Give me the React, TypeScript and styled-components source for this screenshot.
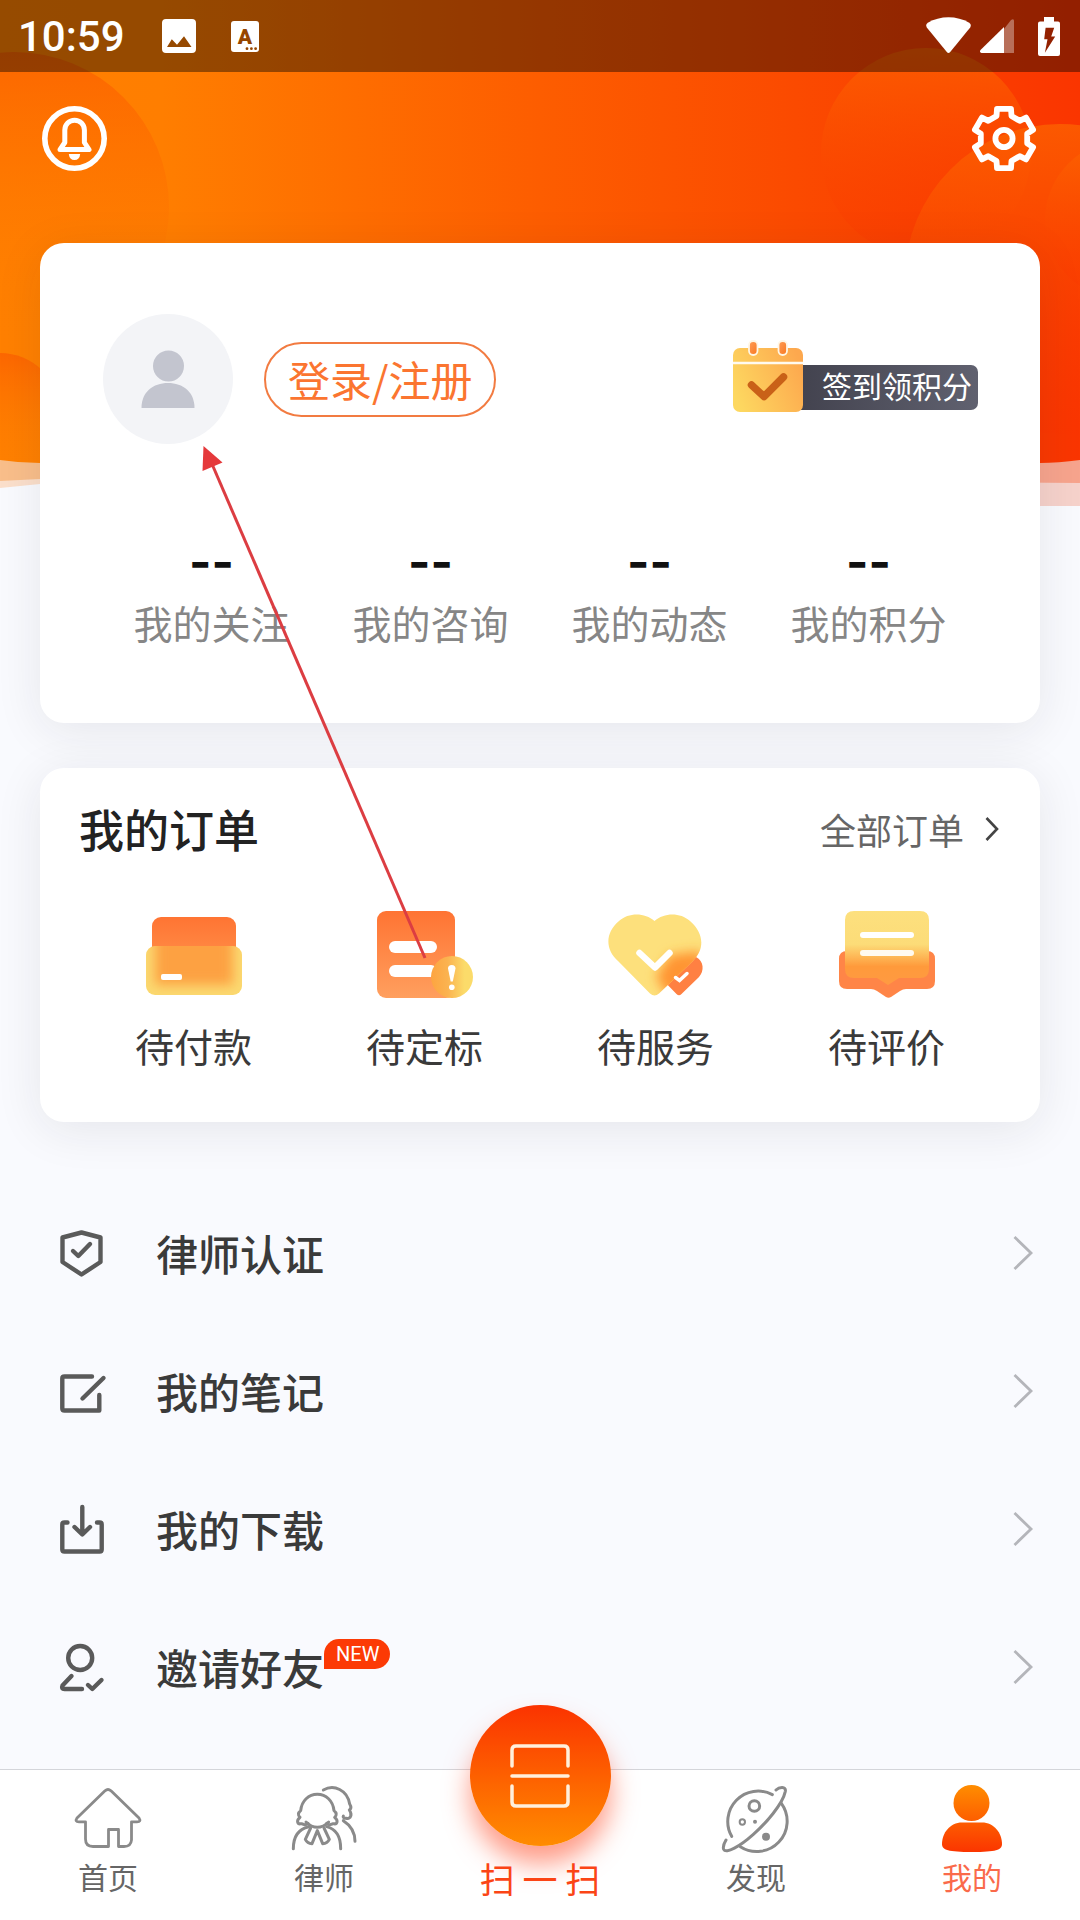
import React from "react";
import styled, { createGlobalStyle } from "styled-components";

const GlobalStyle = createGlobalStyle`
  *, *::before, *::after { box-sizing: border-box; }
  body {
    margin: 0;
    background: #f9fafe;
    font-family: "Noto Sans CJK SC", "Noto Sans", sans-serif;
    color: #3a3a3a;
  }
  button { font: inherit; color: inherit; border: 0; padding: 0; background: none; cursor: pointer; }
  a { color: inherit; text-decoration: none; }
  svg { display: block; flex: none; overflow: visible; }
  h2, ul, dl, dd, dt { margin: 0; padding: 0; }
  ul { list-style: none; }
`;

const Page = styled.div`
  position: relative;
  display: flex;
  flex-direction: column;
  min-height: 100vh;
  overflow: hidden;
`;

const Backdrop = styled.svg`
  position: absolute;
  inset: 0 0 auto 0;
  width: 100%;
  height: 510px;
`;

const StatusBar = styled.header`
  position: relative;
  display: flex;
  align-items: center;
  justify-content: space-between;
  height: 72px;
  padding: 0 20px 0 18px;
  background: rgba(0, 0, 0, 0.41);
  color: #fff;
`;

const StatusGroup = styled.div<{ $gap: number }>`
  display: flex;
  align-items: center;
  gap: ${(p) => p.$gap}px;
`;

const Clock = styled.time`
  padding-top: 2px;
  margin-right: 2px;
  font: 500 42px/48px Roboto, sans-serif;
`;

const TopBar = styled.div`
  position: relative;
  display: flex;
  justify-content: space-between;
  padding: 34px 44px 72px 42px;
`;

const Main = styled.main`
  position: relative;
  flex: 1;
  display: flex;
  flex-direction: column;
  gap: 45px;
`;

const Card = styled.section`
  margin: 0 40px;
  border-radius: 24px;
  background: #fff;
  box-shadow: 0 8px 48px rgba(30, 32, 45, 0.09);
`;

const Profile = styled.div`
  display: flex;
  align-items: center;
  padding: 71px 62px 0 63px;
`;

const Avatar = styled.div`
  width: 130px;
  height: 130px;
  border-radius: 50%;
  background: #f3f4f7;
`;

const LoginButton = styled.button`
  height: 75px;
  margin-left: 31px;
  padding: 0 22px;
  border: 2px solid #f27b41;
  border-radius: 38px;
  color: #fb7530;
  font-size: 42px;
  line-height: 64px;
`;

const CheckInButton = styled.button`
  display: flex;
  align-items: flex-start;
  height: 76px;
  margin-left: auto;
`;

const CheckInLabel = styled.span`
  order: 1;
  height: 45px;
  margin: 24px 0 0 -9px;
  padding: 0 6px 0 27px;
  border-radius: 0 7px 7px 0;
  background: linear-gradient(90deg, #42424e, #60616f);
  color: #fff;
  font-size: 30px;
  line-height: 41px;
`;

const Calendar = styled.svg`
  position: relative;
  z-index: 1;
`;

const Stats = styled.dl`
  display: grid;
  grid-template-columns: repeat(4, 1fr);
  padding: 94px 62px 77px;
`;

const Stat = styled.div`
  display: flex;
  flex-direction: column-reverse;
  gap: 12px;
  text-align: center;
`;

const StatLabel = styled.dt`
  color: #868686;
  font-size: 39px;
  line-height: 48px;
`;

const StatValue = styled.dd`
  color: #111;
  font: 700 48px/48px Inter, sans-serif;
`;

const CardHead = styled.div`
  display: flex;
  align-items: center;
  justify-content: space-between;
  padding: 29px 41px 0 39px;
`;

const CardTitle = styled.h2`
  color: #222;
  font-size: 45px;
  font-weight: 500;
  line-height: 64px;
`;

const AllOrders = styled.a`
  display: flex;
  align-items: center;
  gap: 21px;
  color: #666;
  font-size: 36px;
  line-height: 64px;
`;

const OrderGrid = styled.ul`
  display: grid;
  grid-template-columns: repeat(4, 1fr);
  padding: 50px 38px 53px;
`;

const OrderLink = styled.a`
  display: flex;
  flex-direction: column;
  align-items: center;
  gap: 22px;
  font-size: 39px;
  line-height: 48px;
`;

const Menu = styled.ul`
  margin-top: 17px;
  padding: 0 47px 32px 58px;
`;

const MenuLink = styled.a`
  display: flex;
  align-items: center;
  justify-content: space-between;
  height: 138px;
  font-size: 42px;
  font-weight: 500;
  line-height: 60px;
`;

const MenuName = styled.span`
  display: flex;
  align-items: center;
  gap: 50px;
`;

const MenuText = styled.span`
  position: relative;
`;

const NewBadge = styled.small`
  position: absolute;
  left: 100%;
  top: 2px;
  padding: 0 11px 0 12px;
  border-radius: 15px 15px 15px 0;
  background: #fc3a05;
  color: #fff;
  font: 400 20px/30px Roboto, sans-serif;
`;

const TabBar = styled.nav`
  position: relative;
  display: grid;
  grid-template-columns: repeat(5, 1fr);
  height: 151px;
  border-top: 1px solid #d4d5da;
  background: #fff;
`;

const Tab = styled.a<{ $tone?: "active" | "scan" }>`
  position: relative;
  display: flex;
  flex-direction: column;
  align-items: center;
  gap: 4px;
  padding-top: 16px;
  color: ${(p) => (p.$tone === "active" ? "#fa6a4a" : p.$tone === "scan" ? "#fb4516" : "#666")};
  font-size: ${(p) => (p.$tone === "scan" ? 35 : 30)}px;
  line-height: 36px;
`;

const ScanSpace = styled.span`
  height: 70px;
`;

const ScanDisc = styled.span`
  position: absolute;
  top: -65px;
  display: grid;
  place-items: center;
  width: 141px;
  height: 141px;
  border-radius: 50%;
  background: linear-gradient(#fb3300, #ff8c00);
  box-shadow: 0 18px 26px rgba(255, 60, 20, 0.5);
`;

const Annotation = styled.svg`
  position: absolute;
  left: 200px;
  top: 444px;
  pointer-events: none;
`;

const HeroArt = () => (
  <Backdrop viewBox="0 0 1080 510" preserveAspectRatio="none" aria-hidden="true">
    <defs>
      <linearGradient id="hero" x1="0" x2="1" y1="0" y2="0">
        <stop offset="0" stopColor="#ff8000" />
        <stop offset="0.15" stopColor="#ff7e00" />
        <stop offset="0.5" stopColor="#fd5d00" />
        <stop offset="0.85" stopColor="#fa4100" />
        <stop offset="1" stopColor="#fa3500" />
      </linearGradient>
      <linearGradient id="bubbleLeft" x1="0" x2="0" y1="0" y2="1">
        <stop offset="0" stopColor="#fb5600" stopOpacity="0.6" />
        <stop offset="0.95" stopColor="#ff8000" stopOpacity="0" />
      </linearGradient>
      <linearGradient id="bubbleRight" x1="0" x2="0" y1="0" y2="1">
        <stop offset="0" stopColor="#fc6400" stopOpacity="0.75" />
        <stop offset="1" stopColor="#fa3400" stopOpacity="0.25" />
      </linearGradient>
      <clipPath id="heroClip">
        <path d="M0 0H1080V460Q1058 463 1040 463H40Q20 463 0 460Z" />
      </clipPath>
    </defs>
    <path d="M0 0H600V484H40L0 488Z" fill="#fbdfcb" />
    <path d="M600 300H1080V506H600Z" fill="#f6d2cb" />
    <path d="M0 300H600V479H40L0 481Z" fill="#f9be8a" />
    <path d="M600 300H1080V483L600 479Z" fill="#f7a48d" />
    <g clipPath="url(#heroClip)">
      <rect width="1080" height="480" fill="url(#hero)" />
      <circle cx="14" cy="207" r="155" fill="url(#bubbleLeft)" />
      <circle cx="0" cy="413" r="60" fill="url(#bubbleLeft)" />
      <circle cx="926" cy="153" r="105" fill="url(#bubbleRight)" />
      <circle cx="1060" cy="279" r="155" fill="url(#bubbleRight)" />
      <circle cx="1125" cy="220" r="80" fill="url(#bubbleRight)" />
    </g>
  </Backdrop>
);

const PictureIcon = () => (
  <svg width="34" height="34" viewBox="0 0 34 34" fill="#fff" fillRule="evenodd" aria-hidden="true">
    <path d="M4 0H30Q34 0 34 4V30Q34 34 30 34H4Q0 34 0 30V4Q0 0 4 0ZM5 28H29.5L22 17.3L15 25.7L9.8 20.3Z" />
  </svg>
);

const LanguageIcon = () => (
  <svg width="28" height="31" viewBox="0 0 28 31" aria-hidden="true">
    <rect width="28" height="31" rx="3" fill="#fff" />
    <text x="14" y="22.5" textAnchor="middle" fontFamily="Roboto, sans-serif" fontWeight="900" fontSize="21" fill="#964500">A</text>
    <g fill="#964500">
      <circle cx="16" cy="27.7" r="1.4" />
      <circle cx="20.4" cy="27.7" r="1.4" />
      <circle cx="24.6" cy="27.7" r="1.4" />
    </g>
  </svg>
);

const WifiIcon = () => (
  <svg width="45" height="38" viewBox="0 0 45 38" fill="#fff" aria-hidden="true">
    <path d="M20.8 35L0.8 10.5C-0.4 8.6 0.2 6.8 1.8 5.8C14-1.6 31-1.6 43.2 5.8C44.8 6.8 45.4 8.6 44.2 10.5L24.2 35Q22.5 37 20.8 35Z" />
  </svg>
);

const SignalIcon = () => (
  <svg width="34" height="34" viewBox="0 0 34 34" fill="#fff" aria-hidden="true">
    <path d="M24 10L31 1Q34-1 34 2V34H24Z" opacity="0.35" />
    <path d="M24 8V34H1.5Q-1 33 0.5 31Z" />
  </svg>
);

const BatteryIcon = () => (
  <svg width="22" height="39" viewBox="0 0 22 39" fill="#fff" fillRule="evenodd" aria-hidden="true">
    <path d="M6 0H16V4.5H20Q22 4.5 22 6.5V37Q22 39 20 39H2Q0 39 0 37V6.5Q0 4.5 2 4.5H6ZM7.6 10.7L6.2 22.3H9.5L6.9 35.7L17.2 19.6H13.2L16.2 10.7Z" />
  </svg>
);

const BellIcon = () => (
  <svg width="65" height="65" viewBox="0 0 65 65" fill="none" stroke="#fff" aria-hidden="true">
    <circle cx="32.5" cy="32.5" r="29.7" strokeWidth="5.6" />
    <path d="M22.8 24a9.8 9.8 0 0 1 19.6 0V36.5L47 43.6H18L22.8 36.5Z" strokeWidth="5" strokeLinejoin="round" />
    <path d="M26.8 48H38.2Q37.5 54 32.5 54Q27.5 54 26.8 48Z" fill="#fff" stroke="none" />
  </svg>
);

const gearPoints = [0, 60, 120, 180, 240, 300]
  .flatMap((deg) => {
    const a = (deg * Math.PI) / 180;
    return [[-7.5, -22.5], [-7, -29.6], [7, -29.6], [7.5, -22.5]].map(([x, y]) =>
      `${(x * Math.cos(a) - y * Math.sin(a)).toFixed(1)},${(x * Math.sin(a) + y * Math.cos(a)).toFixed(1)}`
    );
  })
  .join(" ");

const GearIcon = () => (
  <svg width="64" height="65" viewBox="-32 -32.5 64 65" fill="none" stroke="#fff" strokeWidth="5.8" strokeLinejoin="round" aria-hidden="true">
    <polygon points={gearPoints} />
    <circle r="8.6" />
  </svg>
);

const AvatarArt = () => (
  <svg width="130" height="130" viewBox="0 0 130 130" fill="#c3c5cf" aria-hidden="true">
    <circle cx="65.5" cy="52" r="15.5" />
    <path d="M38.5 94C38.5 78 50 69 65 69C80 69 91.5 78 91.5 94Z" />
  </svg>
);

const CalendarArt = () => (
  <Calendar width="72" height="76" viewBox="0 0 72 76" aria-hidden="true">
    <defs>
      <linearGradient id="cal" x1="0" x2="1" y1="0.7" y2="0.3">
        <stop offset="0" stopColor="#fdd860" />
        <stop offset="1" stopColor="#fda84e" />
      </linearGradient>
      <linearGradient id="ring" x1="0" x2="1" y1="0" y2="1">
        <stop offset="0" stopColor="#ff9d57" />
        <stop offset="1" stopColor="#f9781f" />
      </linearGradient>
    </defs>
    <rect x="1" y="7" width="70" height="64" rx="7" fill="url(#cal)" />
    <path d="M1 22H71" stroke="#fffaf0" strokeWidth="2.4" />
    <rect x="17" y="0" width="8.5" height="14" rx="4.2" fill="url(#ring)" stroke="#fff6e4" strokeWidth="1.8" />
    <rect x="46.5" y="0" width="8.5" height="14" rx="4.2" fill="url(#ring)" stroke="#fff6e4" strokeWidth="1.8" />
    <path d="M19.5 44L32 55.5L51.5 36" fill="none" stroke="#c96118" strokeWidth="7.5" strokeLinecap="round" strokeLinejoin="round" />
  </Calendar>
);

const WalletArt = () => (
  <svg width="96" height="88" viewBox="0 0 96 88" aria-hidden="true">
    <defs>
      <linearGradient id="walletBack" x1="0" x2="0" y1="0" y2="1">
        <stop offset="0" stopColor="#ff7433" />
        <stop offset="1" stopColor="#ff914a" />
      </linearGradient>
      <filter id="walletSoft" x="-20%" y="-30%" width="140%" height="160%">
        <feGaussianBlur stdDeviation="6" />
      </filter>
      <clipPath id="walletFront">
        <rect x="0" y="35" width="96" height="49" rx="9" />
      </clipPath>
    </defs>
    <rect x="6" y="6" width="84" height="50" rx="9" fill="url(#walletBack)" />
    <g clipPath="url(#walletFront)">
      <rect y="35" width="96" height="49" fill="#fbd970" />
      <rect x="9" y="20" width="78" height="54" fill="#fda143" filter="url(#walletSoft)" />
    </g>
    <rect x="15" y="63" width="21" height="6" rx="2" fill="#fff" />
  </svg>
);

const BidArt = () => (
  <svg width="96" height="88" viewBox="0 0 96 88" aria-hidden="true">
    <defs>
      <linearGradient id="bidSheet" x1="0" x2="0" y1="0" y2="1">
        <stop offset="0" stopColor="#ff7433" />
        <stop offset="1" stopColor="#ff9f5e" />
      </linearGradient>
      <linearGradient id="bidAlert" x1="0" x2="1" y1="0" y2="0">
        <stop offset="0" stopColor="#fda440" />
        <stop offset="0.4" stopColor="#fbb350" />
        <stop offset="0.8" stopColor="#fbdb6a" />
      </linearGradient>
    </defs>
    <rect width="78" height="87" rx="9" fill="url(#bidSheet)" />
    <rect x="12" y="30" width="48" height="12" rx="6" fill="#fff" />
    <rect x="12" y="54" width="48" height="12" rx="6" fill="#fff" />
    <circle cx="75" cy="66" r="21" fill="url(#bidAlert)" />
    <path d="M71 57.5Q71 54 74.8 54Q78.5 54 78.5 57.5L75.8 70.5H73.7Z" fill="#fff" />
    <circle cx="74.8" cy="76.2" r="2.8" fill="#fff" />
  </svg>
);

const HeartArt = () => (
  <svg width="96" height="88" viewBox="0 0 96 88" aria-hidden="true">
    <defs>
      <filter id="heartSoft" x="-40%" y="-40%" width="180%" height="180%">
        <feGaussianBlur stdDeviation="6" />
      </filter>
      <clipPath id="heartShape">
        <path d="M46.5 10C56 1.5 72 1 82 10C96 22 97 38 85 50L51 82.5Q46.5 86.5 42 82.5L10 50C-3 38-3 22 11 10C21 1 37 1.5 46.5 10Z" />
      </clipPath>
    </defs>
    <path d="M88 46C96 50 96.5 60 91 66L73.5 83Q71 85.5 68.5 83L50 64L70 46Z" fill="#ff8042" />
    <g clipPath="url(#heartShape)">
      <rect width="96" height="88" fill="#fde07c" />
      <path d="M62 44L92 40L96 52L62 88L48 66Z" fill="#ff9433" filter="url(#heartSoft)" />
    </g>
    <path d="M31.5 42L47 56.5L61.5 42" fill="none" stroke="#fff" strokeWidth="6.5" strokeLinecap="round" strokeLinejoin="round" />
    <path d="M67.5 66.5L71.5 69.5L79 62.5" fill="none" stroke="#fff" strokeWidth="3.5" strokeLinecap="round" />
  </svg>
);

const ReviewArt = () => (
  <svg width="96" height="88" viewBox="0 0 96 88" aria-hidden="true">
    <defs>
      <linearGradient id="reviewCard" x1="0" x2="0" y1="0" y2="1">
        <stop offset="0" stopColor="#fde07e" />
        <stop offset="0.45" stopColor="#fcdc78" />
        <stop offset="0.75" stopColor="#ff9a3b" />
        <stop offset="1" stopColor="#ff9a42" />
      </linearGradient>
    </defs>
    <path d="M8 40H88Q96 40 96 48V70Q96 78 88 78H67Q64 78 61 80L52 86Q49.5 87.5 47 86L38 80Q35 78 32 78H8Q0 78 0 70V48Q0 40 8 40Z" fill="#ff8547" />
    <path d="M15 0H81Q90 0 90 9V58Q90 67 81 67H60L49 74L38 67H15Q6 67 6 58V9Q6 0 15 0Z" fill="url(#reviewCard)" />
    <rect x="21" y="21" width="54" height="6" rx="3" fill="#fff" />
    <rect x="21" y="39" width="54" height="6" rx="3" fill="#fffaf0" />
  </svg>
);

const LineIcon = styled.svg.attrs({
  width: 48,
  height: 48,
  viewBox: "0 0 48 48",
  "aria-hidden": true,
})`
  fill: none;
  stroke: #5a5a5a;
  stroke-width: 4.4px;
  stroke-linecap: round;
  stroke-linejoin: round;
`;

const menu = [
  {
    name: "律师认证",
    icon: <LineIcon><path d="M23.5 3.5L42.5 8.5V33L23.5 45.5L4.5 33V8.5Z" /><path d="M15 22L20.3 27L32 15" /></LineIcon>,
  },
  {
    name: "我的笔记",
    icon: <LineIcon><path d="M34 9.5H6.5Q4.3 9.5 4.3 11.5V41.5Q4.3 43.5 6.5 43.5H41.3V28" /><path d="M24.5 31.5L45.5 11" /></LineIcon>,
  },
  {
    name: "我的下载",
    icon: <LineIcon><path d="M9.5 17.5H6.5Q4.3 17.5 4.3 19.5V44.5Q4.3 46.5 6.5 46.5H41.7Q43.7 46.5 43.7 44.5V19.5Q43.7 17.5 41.7 17.5H39" /><path d="M24.3 2V29M16.5 22L24.3 29.5L32 22" /></LineIcon>,
  },
  {
    name: "邀请好友",
    badge: "NEW",
    icon: <LineIcon><circle cx="22.2" cy="15" r="12" /><path d="M13.5 33L4.5 42.5Q3 46 6.5 46H24" /><path d="M30 42L34.3 46L43.5 37" /></LineIcon>,
  },
];

const orders = [
  { name: "待付款", art: <WalletArt /> },
  { name: "待定标", art: <BidArt /> },
  { name: "待服务", art: <HeartArt /> },
  { name: "待评价", art: <ReviewArt /> },
];

const stats = ["我的关注", "我的咨询", "我的动态", "我的积分"];

const HomeIcon = () => (
  <svg width="68" height="68" viewBox="0 0 68 68" fill="none" stroke="#8a8a8a" strokeWidth="2.8" strokeLinejoin="round" aria-hidden="true">
    <path d="M31 4.8Q34 2.3 37 4.8L65 32Q67.5 35.8 63 35.8H57.5V54Q57 60.5 50 60.5H44.5V43.5H34.5V60.5H19Q11.5 60.5 11.5 53V35.8H5Q.5 35.8 3 32Z" />
  </svg>
);

const LawyerIcon = () => (
  <svg width="68" height="68" viewBox="18 18 204 204" fill="none" stroke="#8a8a8a" strokeWidth="9" strokeLinecap="round" strokeLinejoin="round" aria-hidden="true">
    <path d="M72 130C66 136 58 134 52 131C40 134 36 122 48 112C41 106 42 98 50 92C53 62 74 43 100 43C126 43 147 62 150 92C158 98 159 106 152 112C164 122 160 134 148 131C142 134 134 136 128 130" />
    <path d="M66 126Q82 142 100 142Q118 142 134 126" />
    <path d="M80 144L64 178Q70 190 84 191L100 152L116 191Q130 190 136 178L120 144" />
    <path d="M28 206C28 166 48 146 74 140M170 206C170 166 152 146 128 140" />
    <path d="M118 30C150 12 190 30 197 72C202 80 202 86 196 90C206 104 200 118 186 115C180 115 176 111 178 108" />
    <path d="M178 122C203 138 213 160 213 184" />
  </svg>
);

const PlanetIcon = () => (
  <svg width="68" height="68" viewBox="18 18 204 204" fill="none" stroke="#8a8a8a" strokeWidth="9" strokeLinecap="round" aria-hidden="true">
    <path d="M169 44A91 91 0 0 0 47 169" />
    <path d="M196 70A91 91 0 0 1 73 200" />
    <path d="M180 30C190 20 211 18 208 34C200 72 150 130 112 163C72 199 30 222 23 208C20 200 24 190 30 180" />
    <circle cx="115" cy="78" r="16" />
    <circle cx="79" cy="126" r="8" strokeWidth="6" />
    <circle cx="117" cy="125" r="6" fill="#8a8a8a" stroke="none" />
    <circle cx="150" cy="170" r="12" fill="#8a8a8a" stroke="none" />
  </svg>
);

const MineIcon = () => (
  <svg width="68" height="68" viewBox="0 0 68 68" fill="url(#mine)" aria-hidden="true">
    <defs>
      <linearGradient id="mine" gradientUnits="userSpaceOnUse" x1="0" x2="0" y1="0" y2="66">
        <stop offset="0" stopColor="#ff8c00" />
        <stop offset="1" stopColor="#fb3500" />
      </linearGradient>
    </defs>
    <circle cx="33.5" cy="17" r="18" />
    <path d="M24 36.5H44C56 36.5 64 47 64 58C64 64 58 66 34 66C10 66 4 64 4 58C4 47 12 36.5 24 36.5Z" />
  </svg>
);

const ScanIcon = () => (
  <svg width="60" height="64" viewBox="0 0 60 64" fill="none" stroke="#fff0dc" strokeWidth="3.5" strokeLinecap="round" aria-hidden="true">
    <path d="M2 22V6Q2 2 6 2H54Q58 2 58 6V22M2 32H58M2 42V58Q2 62 6 62H54Q58 62 58 58V42" />
  </svg>
);

export default function App() {
  return (
    <Page>
      <GlobalStyle />
      <HeroArt />
      <StatusBar>
        <StatusGroup $gap={35}>
          <Clock>10:59</Clock>
          <PictureIcon />
          <LanguageIcon />
        </StatusGroup>
        <StatusGroup $gap={9}>
          <WifiIcon />
          <StatusGroup $gap={24}>
            <SignalIcon />
            <BatteryIcon />
          </StatusGroup>
        </StatusGroup>
      </StatusBar>
      <TopBar>
        <button type="button" aria-label="消息"><BellIcon /></button>
        <button type="button" aria-label="设置"><GearIcon /></button>
      </TopBar>

      <Main>
        <Card>
          <Profile>
            <Avatar><AvatarArt /></Avatar>
            <LoginButton type="button">登录/注册</LoginButton>
            <CheckInButton type="button">
              <CalendarArt />
              <CheckInLabel>签到领积分</CheckInLabel>
            </CheckInButton>
          </Profile>
          <Stats>
            {stats.map((label) => (
              <Stat key={label}>
                <StatLabel>{label}</StatLabel>
                <StatValue>--</StatValue>
              </Stat>
            ))}
          </Stats>
        </Card>

        <Card>
          <CardHead>
            <CardTitle>我的订单</CardTitle>
            <AllOrders href="#orders">
              全部订单
              <svg width="14" height="24" viewBox="0 0 14 24" fill="none" stroke="#444" strokeWidth="2.6" aria-hidden="true">
                <path d="M1.5 1L12 12L1.5 23" />
              </svg>
            </AllOrders>
          </CardHead>
          <OrderGrid>
            {orders.map((o) => (
              <li key={o.name}>
                <OrderLink href="#orders">
                  {o.art}
                  {o.name}
                </OrderLink>
              </li>
            ))}
          </OrderGrid>
        </Card>

        <Menu>
          {menu.map((m) => (
            <li key={m.name}>
              <MenuLink href="#menu">
                <MenuName>
                  {m.icon}
                  <MenuText>
                    {m.name}
                    {m.badge && <NewBadge>{m.badge}</NewBadge>}
                  </MenuText>
                </MenuName>
                <svg width="20" height="34" viewBox="0 0 20 34" fill="none" stroke="#b4b5ba" strokeWidth="2.8" aria-hidden="true">
                  <path d="M1.5 1L18 17L1.5 33" />
                </svg>
              </MenuLink>
            </li>
          ))}
        </Menu>
      </Main>

      <TabBar>
        <Tab href="#home"><HomeIcon />首页</Tab>
        <Tab href="#lawyer"><LawyerIcon />律师</Tab>
        <Tab href="#scan" $tone="scan">
          <ScanDisc><ScanIcon /></ScanDisc>
          <ScanSpace />
          扫 一 扫
        </Tab>
        <Tab href="#discover"><PlanetIcon />发现</Tab>
        <Tab href="#mine" $tone="active" aria-current="page"><MineIcon />我的</Tab>
      </TabBar>

      <Annotation width="230" height="520" viewBox="0 0 230 520" aria-hidden="true">
        <path d="M12 20L225 514" stroke="#dc3d42" strokeWidth="3" />
        <path d="M3.5 2L22.5 18.5L2.5 27Z" fill="#e5393b" />
      </Annotation>
    </Page>
  );
}
